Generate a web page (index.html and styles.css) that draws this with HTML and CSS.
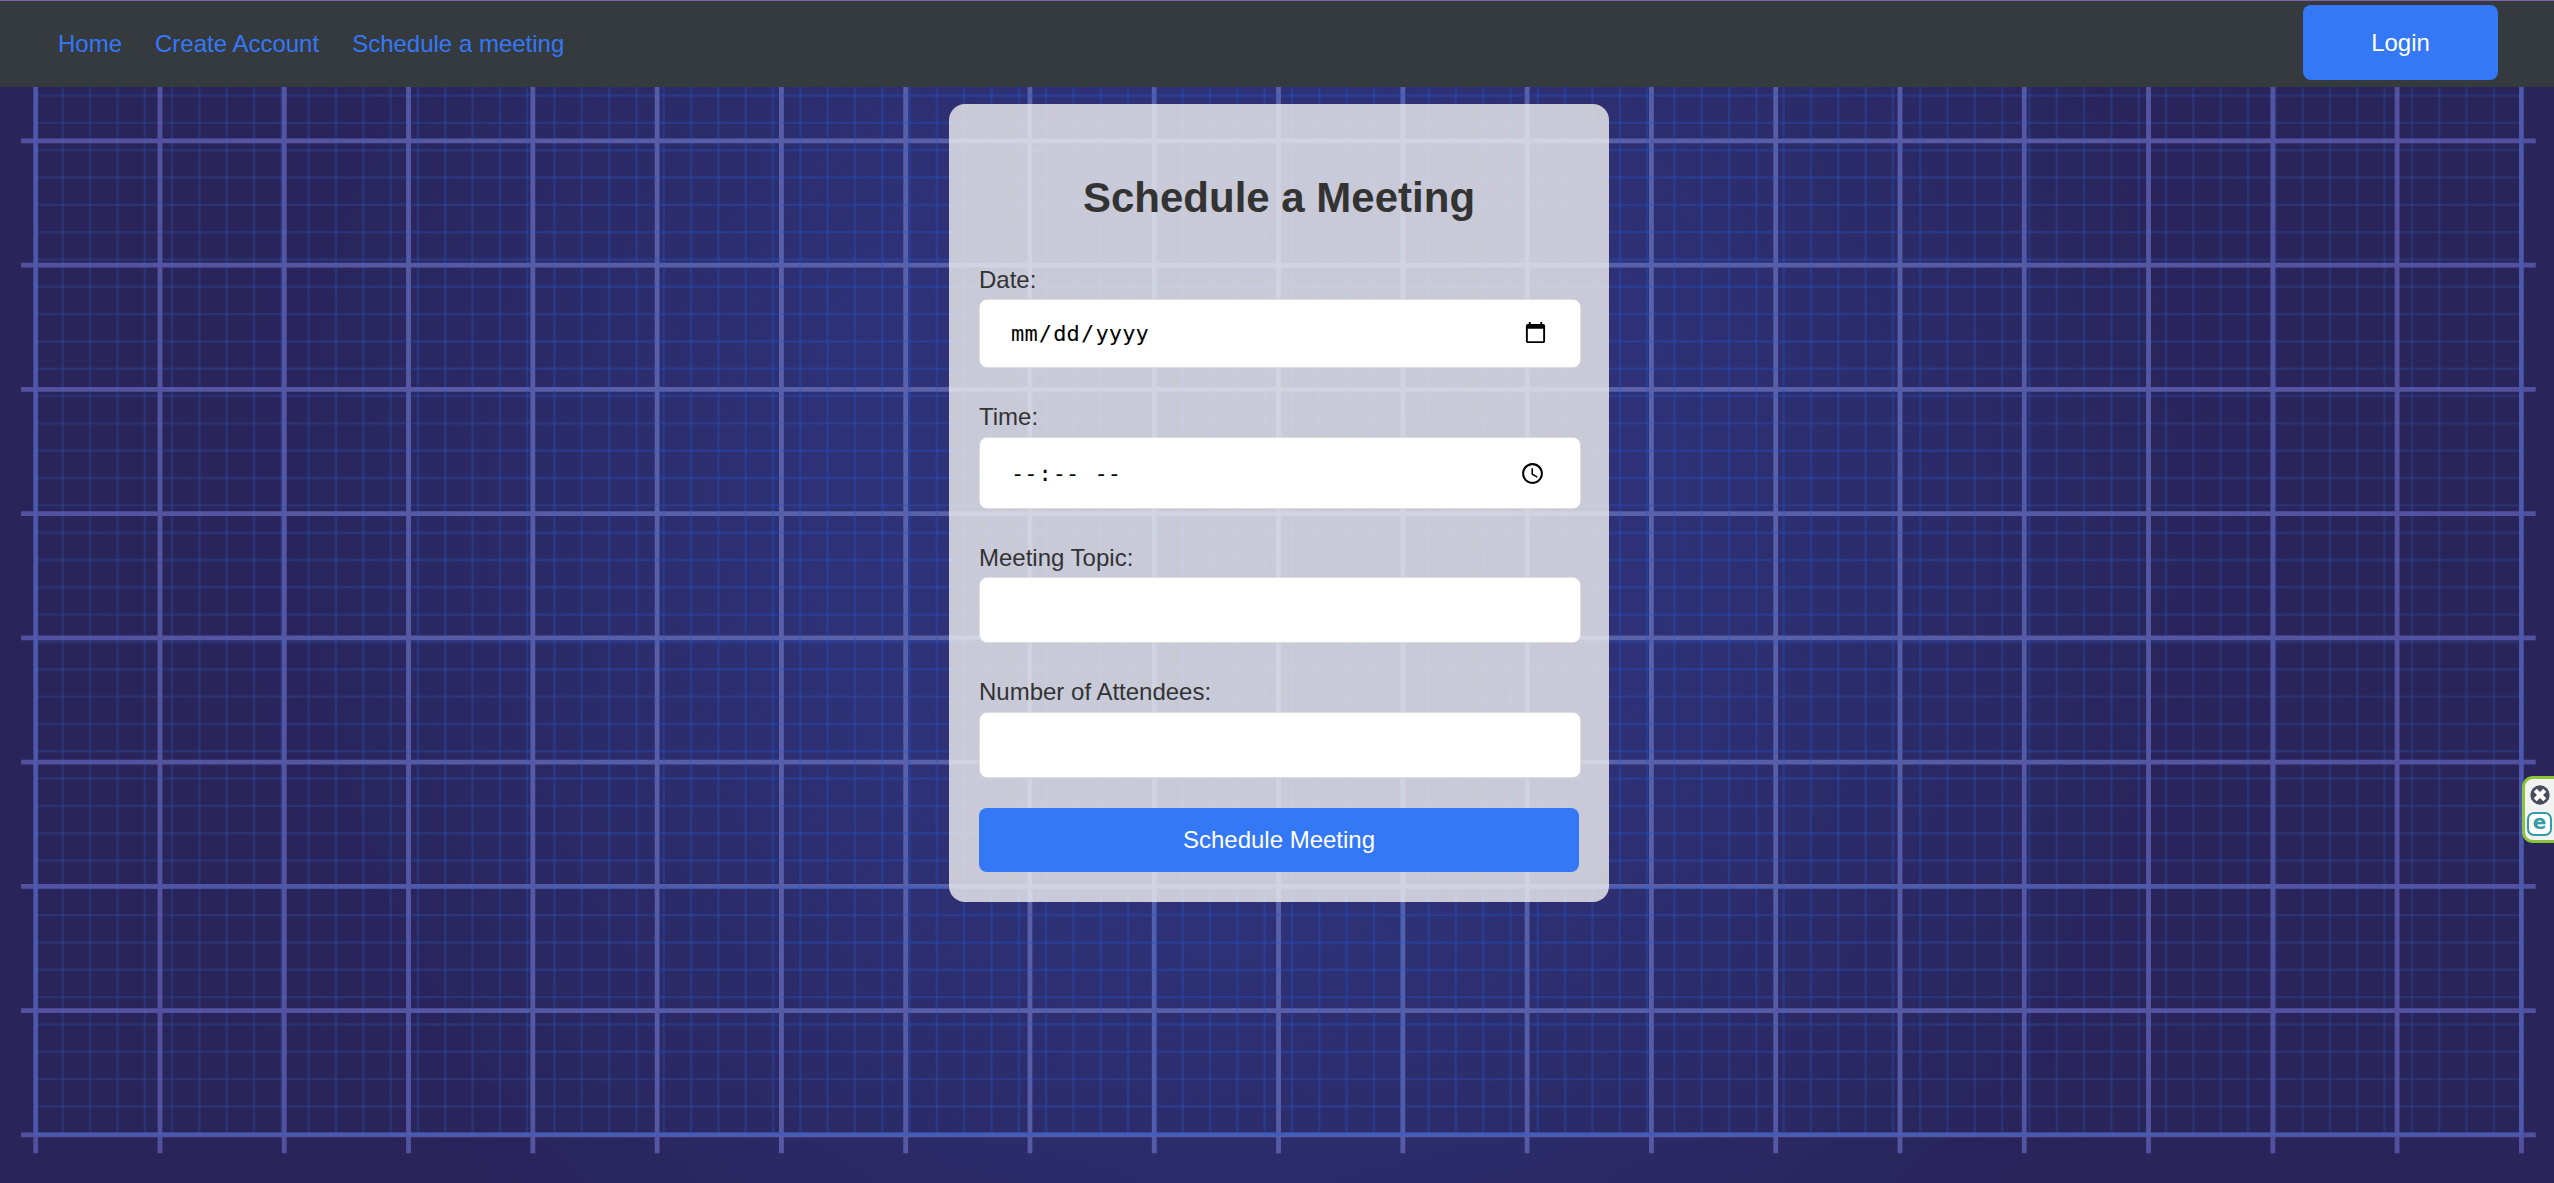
FILE: index.html
```html
<!DOCTYPE html>
<html lang="en-US">
<head>
<meta charset="utf-8">
<title>Schedule a Meeting</title>
<link rel="stylesheet" href="styles.css">
</head>
<body>
<svg class="backdrop" viewBox="0 0 2554 1183" preserveAspectRatio="none" aria-hidden="true">
  <defs>
    <radialGradient id="glow" gradientUnits="userSpaceOnUse" cx="0" cy="0" r="1" gradientTransform="translate(1240 500) scale(1050 1080)">
      <stop offset="0" stop-color="#2f3379"/>
      <stop offset=".4" stop-color="#2e3176"/>
      <stop offset=".9" stop-color="#29255c"/>
      <stop offset="1" stop-color="#29255b"/>
    </radialGradient>
    <radialGradient id="fine" gradientUnits="userSpaceOnUse" cx="0" cy="0" r="1" gradientTransform="translate(1240 500) scale(1150 1080)">
      <stop offset="0" stop-color="#1e58d0" stop-opacity=".32"/>
      <stop offset=".45" stop-color="#2058d0" stop-opacity=".3"/>
      <stop offset="1" stop-color="#3070d8" stop-opacity=".17"/>
    </radialGradient>
    <radialGradient id="bold" gradientUnits="userSpaceOnUse" cx="0" cy="0" r="1" gradientTransform="translate(1240 500) scale(1200 1050)">
      <stop offset="0" stop-color="#5b65ab"/>
      <stop offset=".45" stop-color="#5860a9"/>
      <stop offset="1" stop-color="#53519f"/>
    </radialGradient>
  </defs>
  <rect width="2554" height="1183" fill="url(#glow)"/>
  <g fill="none" stroke="url(#bold)">
    <path d="M33.3 593H2524" stroke-width="1120.6" stroke-dasharray="4.8 119.485"/>
    <path d="M1278.4 14.25V1137.5" stroke-width="2514.6" stroke-dasharray="4.8 119.45"/>
  </g>
  <g fill="none" stroke="url(#fine)">
    <path d="M34.3 584H2523" stroke-width="1098" stroke-dasharray="2.4 24.915"/>
    <path d="M1278.4 12.4V1135.5" stroke-width="2486" stroke-dasharray="2.4 24.92"/>
    <path d="M35.6 87V1134M2521.3 87V1134" stroke-width="3.4"/>
    <path d="M35.6 1134.2H2521.3" stroke-width="3.4"/>
  </g>
</svg>

<header class="navbar">
  <nav class="links">
    <a href="#">Home</a>
    <a href="#">Create Account</a>
    <a href="#">Schedule a meeting</a>
  </nav>
  <button class="login" type="button">Login</button>
</header>

<main>
  <form class="card">
    <h1>Schedule a Meeting</h1>
    <div class="field date">
      <label for="date">Date:</label>
      <input type="date" id="date">
    </div>
    <div class="field time">
      <label for="time">Time:</label>
      <input type="time" id="time">
    </div>
    <div class="field topic">
      <label for="topic">Meeting Topic:</label>
      <input type="text" id="topic">
    </div>
    <div class="field attendees">
      <label for="attendees">Number of Attendees:</label>
      <input type="number" id="attendees">
    </div>
    <button class="submit" type="button">Schedule Meeting</button>
  </form>
</main>

<aside class="widget">
  <svg class="close" viewBox="0 0 20 20" aria-hidden="true">
    <circle cx="10" cy="10" r="9.7" fill="#474e59"/>
    <path d="M5.2 5.2l9.6 9.6M14.8 5.2l-9.6 9.6" stroke="#fff" stroke-width="4.2"/>
  </svg>
  <span class="badge">e</span>
</aside>
</body>
</html>
```
FILE: styles.css
```css
* {
  box-sizing: border-box;
}

body {
  margin: 0;
  height: 1183px;
  overflow: hidden;
  background: #29255b;
  color: #333;
  font: 24px/28px "Liberation Sans", Arial, sans-serif;
}

.backdrop {
  position: absolute;
  inset: 0;
  z-index: -1;
  width: 2554px;
  height: 1183px;
}

.navbar {
  display: flex;
  justify-content: space-between;
  align-items: flex-start;
  height: 87px;
  padding: 4px 56px 0 58px;
  border-top: 1px solid #8064a8;
  background: #353a3e;
}

.links {
  display: flex;
  gap: 33px;
  padding-top: 25px;
}

.links a {
  color: #3478f6;
  text-decoration: none;
}

button {
  border: 0;
  border-radius: 8px;
  background: #3478f6;
  color: #fff;
  font: inherit;
}

.login {
  width: 195px;
  height: 75px;
  padding: 1px 0 0;
}

.card {
  display: flex;
  flex-direction: column;
  width: 660px;
  height: 798px;
  margin: 17px 0 0 949px;
  padding: 69px 30px 0;
  border-radius: 16px;
  background: rgba(240, 240, 240, .8);
}

h1 {
  margin: 0 0 43px;
  font-size: 42px;
  line-height: 50px;
  text-align: center;
}

.field {
  display: flex;
  flex-direction: column;
  justify-content: space-between;
}

.date {
  height: 102px;
  margin-bottom: 35px;
}

.time {
  height: 106px;
  margin-bottom: 35px;
}

.topic {
  height: 99px;
  margin-bottom: 35px;
}

.attendees {
  height: 100px;
  margin-bottom: 30px;
}

input {
  width: 602px;
  height: 66px;
  padding: 0 30px;
  border: 1px solid #ddd;
  border-radius: 8px;
  background: #fff;
  color: #000;
  font: 22px "DejaVu Sans Mono", monospace;
  letter-spacing: .15px;
}

.date input {
  height: 69px;
}

.time input {
  height: 72px;
  padding: 1px 32px 0 30px;
}

input::-webkit-calendar-picker-indicator {
  width: 25px;
  height: 25px;
}

.submit {
  height: 64px;
  padding: 0;
}

.widget {
  position: absolute;
  top: 776px;
  right: 0;
  display: flex;
  flex-direction: column;
  align-items: center;
  gap: 7px;
  width: 32px;
  height: 67px;
  padding: 6px 0 0;
  border: 3px solid #8cc43c;
  border-right: 0;
  border-radius: 11px 0 0 11px;
  background: #f2f2f2;
}

.close {
  width: 20px;
  height: 20px;
}

.badge {
  width: 25px;
  height: 24px;
  border: 2px solid #329ba5;
  border-radius: 7px;
  background: #fff;
  color: #329ba5;
  font: bold 20px/17px "DejaVu Sans", sans-serif;
  text-align: center;
}
```
